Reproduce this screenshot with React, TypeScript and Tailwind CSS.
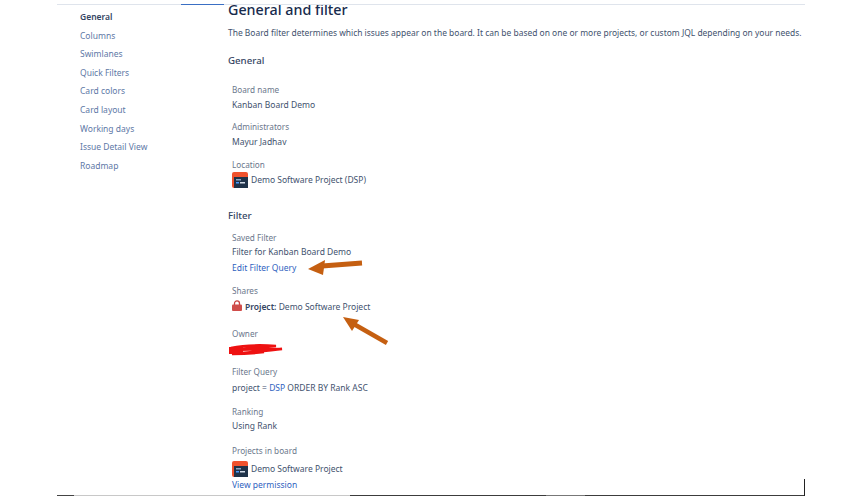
import React from 'react';

const navItems = ['Columns', 'Swimlanes', 'Quick Filters', 'Card colors', 'Card layout', 'Working days', 'Issue Detail View', 'Roadmap'];

function ProjectIcon() {
  return (
    <svg width="16" height="16" viewBox="0 0 16 16" className="shrink-0">
      <rect width="16" height="16" rx="2" fill="#f0522d" />
      <rect x="2" y="5" width="14" height="11" fill="#1f3349" />
      <rect x="4" y="7" width="5" height="1.5" fill="#8fa6c2" />
      <rect x="4" y="10" width="3" height="1.5" fill="#4c9aff" />
      <rect x="8" y="10" width="5" height="1.5" fill="#d3dce8" />
    </svg>
  );
}

function Field({ label, className, children }: { label: string; className: string; children: React.ReactNode }) {
  return (
    <div className={className}>
      <div className="text-[8.2px] leading-[12px] text-[#6b778c]">{label}</div>
      {children}
    </div>
  );
}

export default function App() {
  return (
    <div className="relative h-[497px] w-[853px] overflow-hidden bg-white font-['Noto_Sans',sans-serif] text-[#42526e]">
      <div className="mx-[57px] mt-1 h-[491px] w-[748px]">
        {/* top rule */}
        <div className="relative h-px bg-[#dfe4ec]">
          <div className="absolute left-[124px] top-0 h-px w-[43px] bg-[#3a6fc4]" />
        </div>

        <div className="flex h-[490px]">
          <nav className="w-[171px] shrink-0 pl-[23px] pt-[6px] text-[8.5px]">
            <div className="h-[18.6px] font-semibold leading-[12px] text-[#344563]">General</div>
            {navItems.map((item) => (
              <div key={item} className="h-[18.6px] leading-[12px] text-[#5e78a6]">
                {item}
              </div>
            ))}
          </nav>

          <main className="min-w-0 flex-1 whitespace-nowrap">
            <h1 className="-mt-px text-[14.3px] font-medium leading-[12px] text-[#172b4d]">General and filter</h1>
            <p className="mt-[11px] text-[8.45px] leading-[12px]">
              The Board filter determines which issues appear on the board. It can be based on one or more projects, or custom JQL depending on your needs.
            </p>
            <h2 className="mt-[16px] text-[9.7px] font-medium leading-[12px] text-[#344563]">General</h2>

            <div className="pl-1 text-[8.5px] leading-[12px]">
              <Field label="Board name" className="mt-[17px]">
                <div className="mt-[3px]">Kanban Board Demo</div>
              </Field>
              <Field label="Administrators" className="mt-[10px]">
                <div className="mt-[3px]">Mayur Jadhav</div>
              </Field>
              <Field label="Location" className="mt-[11px]">
                <div className="mt-px flex items-center gap-[3px]">
                  <ProjectIcon />
                  Demo Software Project (DSP)
                </div>
              </Field>
            </div>

            <h2 className="mt-[22px] text-[9.7px] font-medium leading-[12px] text-[#344563]">Filter</h2>

            <div className="pl-1 text-[8.5px] leading-[12px]">
              <Field label="Saved Filter" className="mt-[10px]">
                <div className="mt-[2px]">Filter for Kanban Board Demo</div>
                <div className="mt-1 text-[#2f62c0]">Edit Filter Query</div>
              </Field>
              <Field label="Shares" className="mt-[11px]">
                <div className="mt-1 flex items-center gap-[3px]">
                  <svg width="10" height="11" viewBox="0 0 10 11" className="-mt-[3px] shrink-0">
                    <path d="M2.5 5V3.4a2.5 2.5 0 0 1 5 0V5" fill="none" stroke="#c9423f" strokeWidth="1.3" />
                    <rect y="4.5" width="10" height="6.5" rx="1" fill="#d04d4a" />
                  </svg>
                  <span>
                    <b className="font-semibold text-[#344563]">Project:</b> Demo Software Project
                  </span>
                </div>
              </Field>
              <Field label="Owner" className="mt-[15px]">
                <div className="h-[15px]" />
              </Field>
              <Field label="Filter Query" className="mt-[11px]">
                <div className="mt-1">
                  project = <span className="text-[#2f62c0]">DSP</span> ORDER BY Rank ASC
                </div>
              </Field>
              <Field label="Ranking" className="mt-[12px]">
                <div className="mt-[2px]">Using Rank</div>
              </Field>
              <Field label="Projects in board" className="mt-[13px]">
                <div className="mt-1 flex items-center gap-[3px]">
                  <ProjectIcon />
                  Demo Software Project
                </div>
                <div className="mt-[2px] text-[#2f62c0]">View permission</div>
              </Field>
            </div>
          </main>
        </div>

        {/* bottom edge */}
        <div className="flex h-px">
          <div className="w-[17px] bg-[#444]" />
          <div className="w-[276px] bg-[#c8c8c8]" />
          <div className="w-[196px] bg-[#3c3c3c]" />
          <div className="w-[39px] bg-[#777]" />
          <div className="flex-1 bg-[#3c3c3c]" />
        </div>
      </div>

      {/* annotations drawn over the screenshot */}
      <div className="absolute left-[804px] top-[479px] h-[17px] w-px bg-[#222]" />
      <svg width="853" height="497" className="pointer-events-none absolute left-0 top-0">
        <path d="M362 263 L322 266" stroke="#c55f11" strokeWidth="5" />
        <path d="M308 269 L325 260 L323 275 Z" fill="#c55f11" />
        <path d="M387 343 L352 323" stroke="#c55f11" strokeWidth="4.5" />
        <path d="M343 317 L359 320 L352 331 Z" fill="#c55f11" />
        <path
          d="M231 348 C245 345 262 345 276 346 C262 347 248 348 236 350 C250 349 268 349 282 349 C268 351 250 352 232 354 C245 354 256 353 264 352"
          fill="none"
          stroke="#ee1111"
          strokeWidth="2.5"
        />
        <rect x="229" y="347" width="14" height="7" fill="#ee1111" />
      </svg>
    </div>
  );
}
